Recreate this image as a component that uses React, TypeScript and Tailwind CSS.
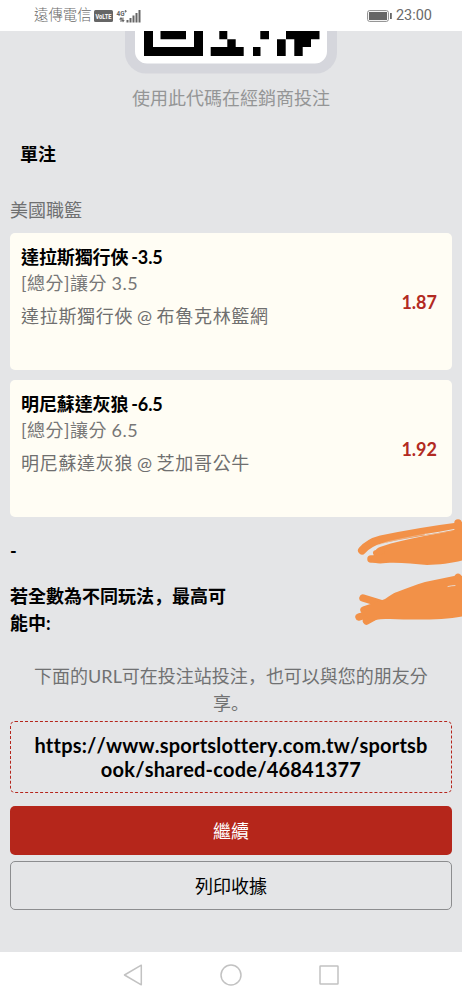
const BETS = [
  {
    team: '達拉斯獨行俠 -3.5',
    market: '[總分]讓分 3.5',
    match: '達拉斯獨行俠 @ 布魯克林籃網',
    odds: '1.87',
  },
  {
    team: '明尼蘇達灰狼 -6.5',
    market: '[總分]讓分 6.5',
    match: '明尼蘇達灰狼 @ 芝加哥公牛',
    odds: '1.92',
  },
]

function StatusBar() {
  return (
    <header className="flex h-[31px] shrink-0 items-center bg-white pt-px pr-[30px] pl-[34px] font-[Roboto,'Noto_Sans_CJK_TC',sans-serif] text-[#6a6a6a]">
      <span className="text-[14.4px] leading-none font-light">遠傳電信</span>
      <svg className="ml-[2px] overflow-visible" width="19" height="12" viewBox="0 0 19 12">
        <rect width="19" height="12" rx="1.5" fill="#666" />
        <text x="1.5" y="8.8" fontSize="7.5" fontWeight="700" fill="#fff" textLength="16" lengthAdjust="spacingAndGlyphs">
          VoLTE
        </text>
      </svg>
      <svg className="ml-[3px] overflow-visible" width="26" height="15" viewBox="0 0 26 15" fill="#666">
        <text x="0.5" y="6.5" fontSize="7" fontWeight="700" textLength="8" lengthAdjust="spacingAndGlyphs">
          4G
        </text>
        <path d="M9.500 1v2.500M8.500 2.200h2.500" stroke="#666" strokeWidth="0.8" />
        <path d="M3 10.500l2-2.500 2 2.500H5.500V13h-1v-2.500zM5.500 11h1V8.500h1V11h1.200L7 13.500z" />
        <rect x="10.500" y="11" width="2" height="2.500" />
        <rect x="13.500" y="9" width="2" height="4.500" />
        <rect x="16.500" y="6.500" width="2" height="7" />
        <rect x="19.500" y="4" width="2" height="9.500" />
        <rect x="22.500" y="1" width="2" height="12.500" />
      </svg>
      <svg className="ml-auto" width="25" height="12" viewBox="0 0 25 12">
        <rect x="0.6" y="0.6" width="20.8" height="10.8" rx="2" fill="none" stroke="#8a8a8a" strokeWidth="1" />
        <rect x="2" y="2" width="18" height="8" fill="#666" />
        <rect x="23" y="3" width="1.8" height="6" fill="#666" />
      </svg>
      <span className="mt-px ml-1 text-[14.5px] leading-none">23:00</span>
    </header>
  )
}

function QrCode() {
  return (
    <svg className="mx-auto block" width="212" height="43" viewBox="125 31 212 43">
      <path d="M125 31h212v21.500a21 21 0 0 1-21 21H146a21 21 0 0 1-21-21z" fill="#d5d6dc" />
      <path d="M135 31h192v20.500a12 12 0 0 1-12 12H147a12 12 0 0 1-12-12z" fill="#fff" />
      <path
        d="M144 31h9v16h41V31h9v25h-59zM160.500 31H186v8.300h-25.500zM219.300 31h8v8.300h8.400V47h8v9h-33v-9h16.600v-7.700h-8zM260.300 31h8.700v8.300h-8.700zM253 47h7.500v9H253zM286 31h33.500v8.300H311V47h-8.300v9h-8.400V39.300h-8.600V56H277V39.300h9z"
        fill="#000"
      />
    </svg>
  )
}

function BetCard({ bet }: { bet: (typeof BETS)[number] }) {
  return (
    <div className="flex h-[137px] items-center justify-between rounded-[5px] bg-[#fffdf4] pr-[15px] pl-[11px]">
      <div className="h-full pt-[11px]">
        <h3 className="text-[18px] leading-[26px] font-bold tracking-[-0.1px] text-black [word-spacing:-1.5px]">
          {bet.team}
        </h3>
        <p className="text-[18px] leading-[26px] tracking-[0.5px] text-[#777] [word-spacing:-0.5px]">{bet.market}</p>
        <p className="mt-[7px] text-[18px] leading-[26px] tracking-[0.7px] text-[#6f6f6f] [word-spacing:-1.5px]">
          {bet.match}
        </p>
      </div>
      <span className="pt-px text-[18px] font-bold text-[#b22a22]">{bet.odds}</span>
    </div>
  )
}

// SC glyphs keep the punctuation at the bottom left of its cell
function Punct({ children }: { children: string }) {
  return (
    <span lang="zh-CN" className="font-['Noto_Sans_CJK_SC',sans-serif] leading-none">
      {children}
    </span>
  )
}

function Scribbles() {
  return (
    <svg
      className="absolute top-[518px] left-[354px]"
      width="108"
      height="110"
      viewBox="354 518 108 110"
      fill="#f29148"
      stroke="#f29148"
      strokeLinecap="round"
      strokeLinejoin="round"
    >
      <path d="M362 550.500q7-8 19-11 38-8 81-13.500" fill="none" strokeWidth="8" />
      <path d="M458 523v5M371 559h10" strokeWidth="7.500" />
      <path d="M376 552c-1-2 1-4 4-5 14-5 30-8 44-11l40-7v31c-10 3-25 5-37 5-14-1-28-3-41-2-8 1-12 0-16-2z" stroke="none" />
      <path d="M376 553l6-2" strokeWidth="6" />
      <path d="M378 545q10-4 20-5.500 14-3 28-5.500" fill="none" stroke="#ecc9ac" strokeWidth="0.6" />
      <path d="M425 534.500q14-2 29-5" fill="none" stroke="#e8e6e4" strokeWidth="1" />

      <path d="M363 598l18 5.500M364 610l15-5M359 617l10-3M366.500 621l9-5M458 577.500l3 3" strokeWidth="7.500" />
      <path d="M364 607c7-3 14-5 21-8 3-2 8-6 12-7 10-4 18-7 28-10l29-6 10 2v38c-18 4-47 4-74 3-7 0-12 0-18 2l-8-6z" stroke="none" />
      <path d="M448 586.500q4-1 7-1" fill="none" stroke="#e8e6e4" strokeWidth="0.8" />
    </svg>
  )
}

function NavigationBar() {
  return (
    <nav className="flex h-12 shrink-0 items-center justify-center gap-[76px] bg-white pb-[2px]">
      <svg width="22" height="22" viewBox="0 0 22 22" fill="none" stroke="#c2c2c2" strokeWidth="1.5" strokeLinejoin="round">
        <path d="M2.500 11L19.300 1.200v19.600z" />
      </svg>
      <svg width="22" height="22" viewBox="0 0 22 22" fill="none" stroke="#c2c2c2" strokeWidth="1.5">
        <circle cx="11" cy="11" r="10" />
      </svg>
      <svg width="22" height="22" viewBox="0 0 22 22" fill="none" stroke="#c2c2c2" strokeWidth="1.5">
        <rect x="2" y="2" width="18" height="18" rx="0.5" />
      </svg>
    </nav>
  )
}

export default function App() {
  return (
    <div className="relative flex h-[1000px] w-[462px] flex-col overflow-hidden bg-[#e4e5e7] font-[Lato,'Noto_Sans_CJK_TC',sans-serif]">
      <StatusBar />

      <main className="flex-1 px-[10px]">
        <QrCode />
        <p className="mt-[11px] text-center text-[18px] leading-[26px] text-[#949596]">使用此代碼在經銷商投注</p>
        <h2 className="mt-[30px] pl-[10px] text-[18px] leading-[26px] font-bold">單注</h2>
        <p className="mt-[30px] text-[18px] leading-[26px] text-[#6f7071]">美國職籃</p>

        <div className="mt-[10px] flex flex-col gap-[10px]">
          {BETS.map((bet) => (
            <BetCard key={bet.odds} bet={bet} />
          ))}
        </div>

        <p className="mt-[21px] text-[18px] leading-[26px] font-bold">-</p>
        <p className="mt-[19px] w-[220px] text-[18px] leading-[27px] font-bold">
          若全數為不同玩法
          <Punct>，</Punct>
          最高可
          <br />
          能中:
        </p>

        <p className="mt-[26px] text-center text-[18px] leading-[27px] text-[#707172]">
          下面的URL可在投注站投注
          <Punct>，</Punct>
          也可以與您的朋友分
          <br />享<Punct>。</Punct>
        </p>
        <div className="mt-[4px] flex h-[72px] items-center justify-center rounded-[5px] border border-dashed border-[#b5251c] text-center text-[20px] leading-6 font-bold tracking-[0.2px] [font-kerning:none]">
          <p>
            https://www.sportslottery.com.tw/sportsb
            <br />
            ook/shared-code/46841377
          </p>
        </div>

        <button className="mt-[13px] block h-[49px] w-full rounded-[5px] bg-[#b5261b] pt-[2px] text-[18px] text-white">
          繼續
        </button>
        <button className="mt-[6px] block h-[49px] w-full rounded-[5px] border border-[#8c8d8f] pt-px text-[18px] text-black">
          列印收據
        </button>
      </main>

      <Scribbles />
      <NavigationBar />
    </div>
  )
}
